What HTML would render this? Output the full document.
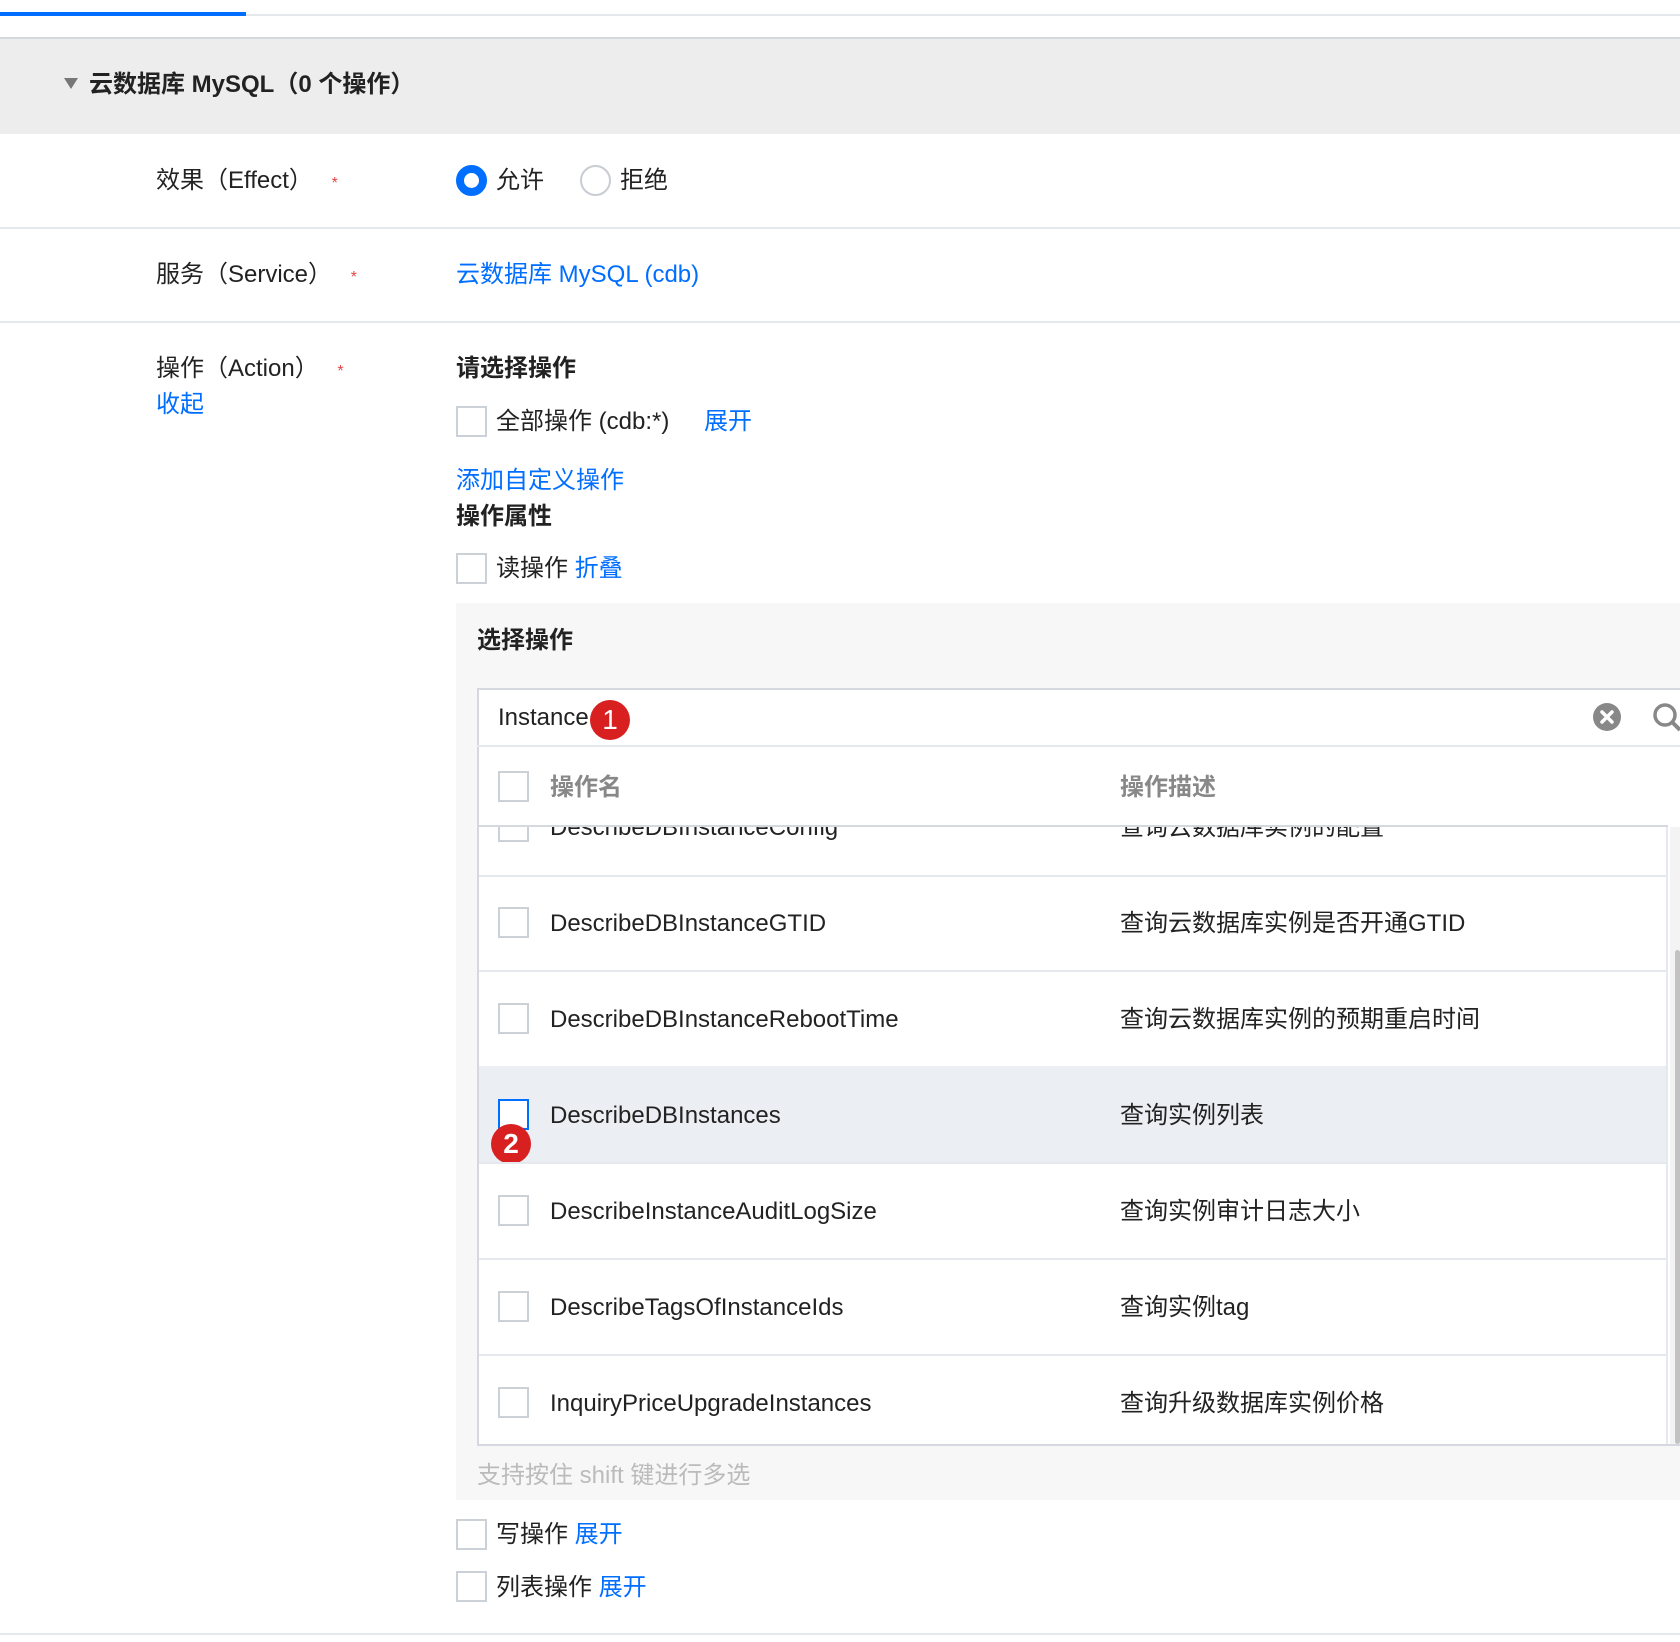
<!DOCTYPE html>
<html><head><meta charset="utf-8"><style>
*{margin:0;padding:0;box-sizing:border-box}
body{width:1680px;height:1642px;background:#fff;position:relative;overflow:hidden;font-family:"Liberation Sans","Noto Sans CJK SC",sans-serif;color:#222;font-size:24px}
.a{position:absolute;white-space:nowrap;line-height:1}
.blue{color:#006eff}
.line{position:absolute;left:0;right:0;height:2px;background:#e5e8ec}
.cb{position:absolute;width:31px;height:31px;border:2px solid #ccd1d8;background:#fff}
.star{color:#e54545;font-size:16px}
.b{font-weight:bold}
</style></head><body>
<div style="position:absolute;left:0;top:14px;width:1680px;height:2px;background:#e5e8ec"></div>
<div style="position:absolute;left:0;top:12px;width:246px;height:4px;background:#006eff"></div>
<div style="position:absolute;left:0;top:37px;width:1680px;height:97px;background:#ededed;border-top:2px solid #d5d8dc"></div>
<div class="a" style="left:64px;top:78px;width:0;height:0;border-left:7px solid transparent;border-right:7px solid transparent;border-top:11px solid #777"></div>
<div class="a b" style="left:89px;top:73px;font-size:24px">云数据库 MySQL（0 个操作）</div>

<div class="a" style="left:156px;top:169px">效果（Effect） <span class="star" style="margin-left:12px">*</span></div>
<div class="a" style="left:456px;top:165px;width:31px;height:31px;border-radius:50%;border:8px solid #006eff;background:#fff"></div>
<div class="a" style="left:496px;top:169px">允许</div>
<div class="a" style="left:580px;top:165px;width:31px;height:31px;border-radius:50%;border:2px solid #c8cdd3"></div>
<div class="a" style="left:620px;top:169px">拒绝</div>
<div class="line" style="top:227px"></div>

<div class="a" style="left:156px;top:263px">服务（Service） <span class="star" style="margin-left:12px">*</span></div>
<div class="a blue" style="left:456px;top:263px">云数据库 MySQL (cdb)</div>
<div class="line" style="top:321px"></div>

<div class="a" style="left:156px;top:357px">操作（Action） <span class="star" style="margin-left:12px">*</span></div>
<div class="a blue" style="left:156px;top:393px">收起</div>
<div class="a b" style="left:456px;top:357px">请选择操作</div>
<div class="cb" style="left:456px;top:406px"></div>
<div class="a" style="left:496px;top:410px">全部操作 (cdb:*)</div>
<div class="a blue" style="left:704px;top:410px">展开</div>
<div class="a blue" style="left:456px;top:469px">添加自定义操作</div>
<div class="a b" style="left:456px;top:505px">操作属性</div>
<div class="cb" style="left:456px;top:553px"></div>
<div class="a" style="left:496px;top:557px">读操作 <span class="blue">折叠</span></div>

<div style="position:absolute;left:456px;top:603px;width:1224px;height:897px;background:#f7f7f7"></div>
<div class="a b" style="left:477px;top:629px">选择操作</div>
<div style="position:absolute;left:477px;top:688px;width:1203px;height:758px;background:#fff;border:2px solid #d5d9df;border-right:none"></div>
<div class="line" style="left:477px;top:745px"></div>
<div class="a" style="left:498px;top:706px">Instance</div>
<div class="a" style="left:590px;top:700px;width:40px;height:40px;border-radius:50%;background:#d92020;color:#fff;font-size:28px;text-align:center;line-height:40px">1</div>
<svg class="a" style="left:1593px;top:703px" width="28" height="28" viewBox="0 0 28 28"><circle cx="14" cy="14" r="14" fill="#888"/><path d="M9 9l10 10M19 9l-10 10" stroke="#fff" stroke-width="3.5" stroke-linecap="round"/></svg>
<svg class="a" style="left:1652px;top:702px" width="28" height="30" viewBox="0 0 28 30"><circle cx="13" cy="13" r="10" fill="none" stroke="#888" stroke-width="3.5"/><path d="M21 21l7 7" stroke="#888" stroke-width="4"/></svg>

<div class="cb" style="left:498px;top:771px"></div>
<div class="a b" style="left:550px;top:776px;color:#888">操作名</div>
<div class="a b" style="left:1120px;top:776px;color:#888">操作描述</div>
<div style="position:absolute;left:479px;top:825px;width:1189px;height:2px;background:#d5d9df"></div>

<div style="position:absolute;left:479px;top:827px;width:1189px;height:617px;overflow:hidden;border-right:2px solid #e5e8ec">
 <div class="cb" style="left:19px;top:-16px"></div>
 <div class="a" style="left:71px;top:-11px">DescribeDBInstanceConfig</div>
 <div class="a" style="left:641px;top:-11px">查询云数据库实例的配置</div>
 <div class="line" style="top:48px"></div>
 <div class="cb" style="left:19px;top:80px"></div>
 <div class="a" style="left:71px;top:85px">DescribeDBInstanceGTID</div>
 <div class="a" style="left:641px;top:85px">查询云数据库实例是否开通GTID</div>
 <div class="line" style="top:143px"></div>
 <div class="cb" style="left:19px;top:176px"></div>
 <div class="a" style="left:71px;top:181px">DescribeDBInstanceRebootTime</div>
 <div class="a" style="left:641px;top:181px">查询云数据库实例的预期重启时间</div>
 <div style="position:absolute;left:0;right:0;top:239px;height:96px;background:#ebeef2"></div>
 <div class="cb" style="left:19px;top:272px;border-color:#006eff"></div>
 <div class="a" style="left:71px;top:277px">DescribeDBInstances</div>
 <div class="a" style="left:641px;top:277px">查询实例列表</div>
 <div class="a" style="left:12px;top:297px;width:40px;height:40px;border-radius:50%;background:#d92020;color:#fff;font-size:28px;font-weight:bold;text-align:center;line-height:40px">2</div>
 <div class="line" style="top:335px"></div>
 <div class="cb" style="left:19px;top:368px"></div>
 <div class="a" style="left:71px;top:373px">DescribeInstanceAuditLogSize</div>
 <div class="a" style="left:641px;top:373px">查询实例审计日志大小</div>
 <div class="line" style="top:431px"></div>
 <div class="cb" style="left:19px;top:464px"></div>
 <div class="a" style="left:71px;top:469px">DescribeTagsOfInstanceIds</div>
 <div class="a" style="left:641px;top:469px">查询实例tag</div>
 <div class="line" style="top:527px"></div>
 <div class="cb" style="left:19px;top:560px"></div>
 <div class="a" style="left:71px;top:565px">InquiryPriceUpgradeInstances</div>
 <div class="a" style="left:641px;top:565px">查询升级数据库实例价格</div>
</div>
<div style="position:absolute;left:1670px;top:827px;width:10px;height:617px;background:#f3f3f3"></div>
<div style="position:absolute;left:1675px;top:950px;width:5px;height:494px;background:#c2c2c2;border-radius:3px"></div>

<div class="a" style="left:477px;top:1464px;color:#bbb">支持按住 shift 键进行多选</div>

<div class="cb" style="left:456px;top:1519px"></div>
<div class="a" style="left:496px;top:1523px">写操作 <span class="blue">展开</span></div>
<div class="cb" style="left:456px;top:1571px"></div>
<div class="a" style="left:496px;top:1576px">列表操作 <span class="blue">展开</span></div>
<div class="line" style="top:1633px"></div>
</body></html>
